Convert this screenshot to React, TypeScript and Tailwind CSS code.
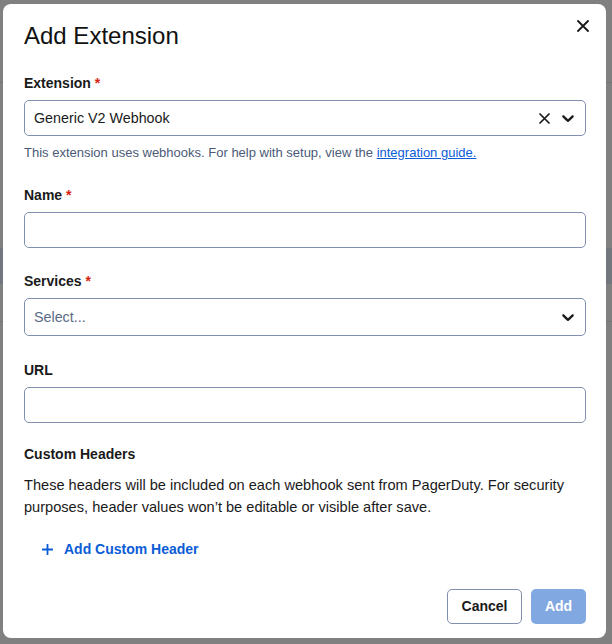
import React from "react";

const font = { fontFamily: '"Liberation Sans", Arial, Helvetica, sans-serif' };

function Chevron() {
  return (
    <svg width="20" height="20" viewBox="0 0 20 20" aria-hidden="true" fill="#1a1a1a">
      <path d="M4.516 7.548c0.436-0.446 1.043-0.481 1.576 0l3.908 3.747 3.908-3.747c0.533-0.481 1.141-0.446 1.574 0 0.436 0.445 0.408 1.197 0 1.615-0.406 0.418-4.695 4.502-4.695 4.502-0.217 0.223-0.502 0.335-0.787 0.335s-0.57-0.112-0.789-0.335c0 0-4.287-4.084-4.695-4.502s-0.436-1.17 0-1.615z" />
    </svg>
  );
}

function XIcon({ size, stroke = 1.8, color = "#1a1a1a" }: { size: number; stroke?: number; color?: string }) {
  return (
    <svg width={size} height={size} viewBox={`0 0 ${size} ${size}`} aria-hidden="true">
      <path d={`M1 1 L${size - 1} ${size - 1} M${size - 1} 1 L1 ${size - 1}`} stroke={color} strokeWidth={stroke} strokeLinecap="round" fill="none" />
    </svg>
  );
}

function Label({ text, required }: { text: string; required?: boolean }) {
  return (
    <div className="text-[14px] leading-5 font-bold text-[#1a1a1a]">
      {text}
      {required && <span className="text-[#d91f11]"> *</span>}
    </div>
  );
}

export default function App() {
  return (
    <div style={font} className="relative w-[612px] h-[644px] overflow-hidden bg-[#808080]">
      {/* underlying page, dimmed */}
      <div className="flex flex-col">
        <div className="h-[82px]" />
        <div className="h-px bg-[#747474]" />
        <div className="h-[165px]" />
        <div className="h-[36px] bg-[#72767d]" />
        <div className="h-[37px]" />
        <div className="h-px bg-[#747474]" />
      </div>

      {/* modal */}
      <div className="absolute left-[3px] top-[4px] w-[603px] h-[634px] bg-white rounded-[8px] flex flex-col pt-4 pl-[21px] pr-[20px]">
        <div className="flex items-start justify-between">
          <h2 className="text-[24px] leading-8 text-[#111111] font-normal">Add Extension</h2>
          <button className="mr-[-3px] mt-0 p-0">
            <XIcon size={12} stroke={1.8} color="#1a1a1a" />
          </button>
        </div>

        <div className="mt-[21px]">
          <Label text="Extension" required />
        </div>
        <div className="mt-[7px] h-9 rounded-[5px] border border-[#7f8fad] flex items-center pl-[9px] pr-[7px]">
          <span className="flex-1 pt-[2px] text-[14.3px] text-[#1a1a1a]">Generic V2 Webhook</span>
          <span className="flex items-center justify-center w-5 h-5 mr-[4px]">
            <XIcon size={11} stroke={1.7} color="#1a1a1a" />
          </span>
          <span className="flex items-center justify-center">
            <Chevron />
          </span>
        </div>
        <div className="mt-[9px] text-[13px] leading-4 text-[#4a5a77]">
          This extension uses webhooks. For help with setup, view the{" "}
          <a className="text-[#0b5cd7] underline">integration guide.</a>
        </div>

        <div className="mt-6">
          <Label text="Name" required />
        </div>
        <div className="mt-[7px] h-9 rounded-[5px] border border-[#7f8fad]" />

        <div className="mt-[23px]">
          <Label text="Services" required />
        </div>
        <div className="mt-[7px] h-[38px] rounded-[5px] border border-[#7f8fad] flex items-center pl-[9px] pr-[7px]">
          <span className="flex-1 pt-[2px] text-[14.3px] text-[#5a6a84]">Select...</span>
          <span className="flex items-center justify-center">
            <Chevron />
          </span>
        </div>

        <div className="mt-6">
          <Label text="URL" />
        </div>
        <div className="mt-[7px] h-9 rounded-[5px] border border-[#7f8fad]" />

        <div className="mt-[21px]">
          <Label text="Custom Headers" />
        </div>
        <p className="mt-[10px] text-[14.6px] leading-[22px] text-[#1a1a1a]">
          These headers will be included on each webhook sent from PagerDuty. For security purposes, header values won’t be editable or visible after save.
        </p>

        <div className="mt-[21px] flex">
          <button className="flex items-center pl-[18px] text-[14px] leading-5 font-bold text-[#0b5cd7]">
            <svg width="11" height="11" viewBox="0 0 11 11" aria-hidden="true">
              <path d="M5.5 0.5 V10.5 M0.5 5.5 H10.5" stroke="#0b5cd7" strokeWidth="1.8" strokeLinecap="round" />
            </svg>
            <span className="ml-[11px]">Add Custom Header</span>
          </button>
        </div>

        <div className="mt-[30px] flex justify-end gap-[9px]">
          <button className="w-[75px] h-[35px] rounded-[5px] border border-[#7f8fad] bg-white text-[14px] font-bold text-[#1a1a1a] flex items-center justify-center">
            Cancel
          </button>
          <button className="w-[55px] h-[35px] rounded-[5px] bg-[#82a8e1] text-[14px] font-bold text-white flex items-center justify-center">
            Add
          </button>
        </div>
      </div>
    </div>
  );
}
